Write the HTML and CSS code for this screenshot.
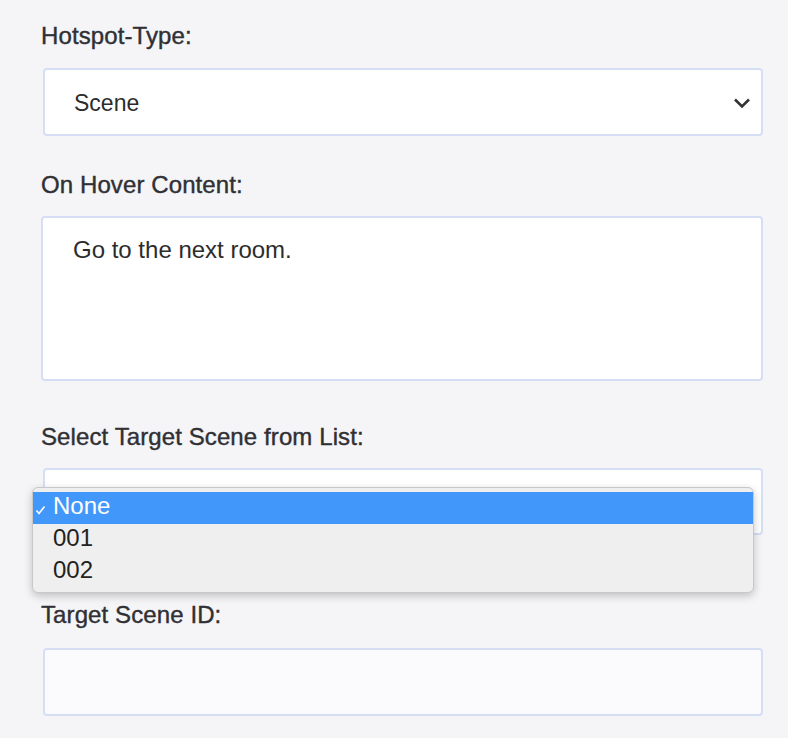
FILE: index.html
```html
<!DOCTYPE html>
<html>
<head>
<meta charset="utf-8">
<link rel="stylesheet" href="styles.css">
</head>
<body>
<form class="form">
  <div class="group g1">
    <label class="label">Hotspot-Type:</label>
    <div class="select">
      <span class="select-value">Scene</span>
      <svg class="chev" width="18" height="12" viewBox="0 0 18 12"><polyline points="2,2.5 9,9.5 16,2.5" fill="none" stroke="#333" stroke-width="2.6"/></svg>
    </div>
  </div>
  <div class="group g2">
    <label class="label">On Hover Content:</label>
    <div class="textarea">Go to the next room.</div>
  </div>
  <div class="group g3">
    <label class="label">Select Target Scene from List:</label>
    <div class="select-wrap">
      <div class="select empty"></div>
      <ul class="popup">
        <li class="opt active"><svg class="check" width="11" height="10" viewBox="0 0 11 10"><polyline points="1.5,5.5 4,8.5 9.5,1.5" fill="none" stroke="#fff" stroke-width="1.6"/></svg>None</li>
        <li class="opt">001</li>
        <li class="opt">002</li>
      </ul>
    </div>
  </div>
  <div class="group g4">
    <label class="label">Target Scene ID:</label>
    <div class="input"></div>
  </div>
</form>
</body>
</html>
```
FILE: styles.css
```css
html, body {
  margin: 0;
  padding: 0;
  background: #f5f5f8;
}
body {
  font-family: "Liberation Sans", Arial, sans-serif;
  color: #333;
}
.form {
  padding: 22px 25px 0 41px;
  width: 722px;
}
.group {
  display: flex;
  flex-direction: column;
}
.label {
  display: block;
  font-size: 24px;
  line-height: 28px;
  height: 28px;
  color: #303034;
  -webkit-text-stroke: 0.4px #303034;
  letter-spacing: 0.1px;
  margin-left: 0;
}
.select {
  box-sizing: border-box;
  height: 68px;
  margin-top: 18px;
  margin-left: 2px;
  background: #fff;
  border: 2px solid #d6def6;
  border-radius: 4px;
  display: flex;
  align-items: center;
  justify-content: space-between;
  padding: 0 10px 0 29px;
}
.select-value {
  font-size: 23px;
  color: #2c2c2c;
  padding-top: 2px;
}
.chev {
  margin-top: 1px;
}
.g2 {
  margin-top: 35px;
}
.textarea {
  box-sizing: border-box;
  height: 165px;
  margin-top: 17px;
  background: #fff;
  border: 2px solid #d6def6;
  border-radius: 4px;
  font-size: 24px;
  line-height: 28px;
  color: #2c2c2c;
  padding: 18px 30px;
}
.g3 {
  margin-top: 42px;
}
.select-wrap {
  position: relative;
}
.select.empty {
  height: 67px;
  margin-top: 17px;
}
.popup {
  position: absolute;
  left: -9px;
  top: 36px;
  width: 722px;
  box-sizing: border-box;
  margin: 0;
  padding: 4px 0;
  list-style: none;
  background: #efefef;
  border: 1px solid #c8c8c8;
  border-radius: 6px;
  box-shadow: 0 3px 9px rgba(0, 0, 0, 0.22);
}
.opt {
  position: relative;
  height: 32px;
  line-height: 28px;
  font-size: 24px;
  padding-left: 20px;
  color: #222;
}
.opt.active {
  background: #4297fb;
  color: #fff;
}
.check {
  position: absolute;
  left: 2px;
  top: 13px;
}
.g4 {
  margin-top: 66px;
}
.input {
  box-sizing: border-box;
  height: 68px;
  margin-top: 19px;
  margin-left: 2px;
  background: #fbfbfe;
  border: 2px solid #d6def6;
  border-radius: 4px;
}
```
